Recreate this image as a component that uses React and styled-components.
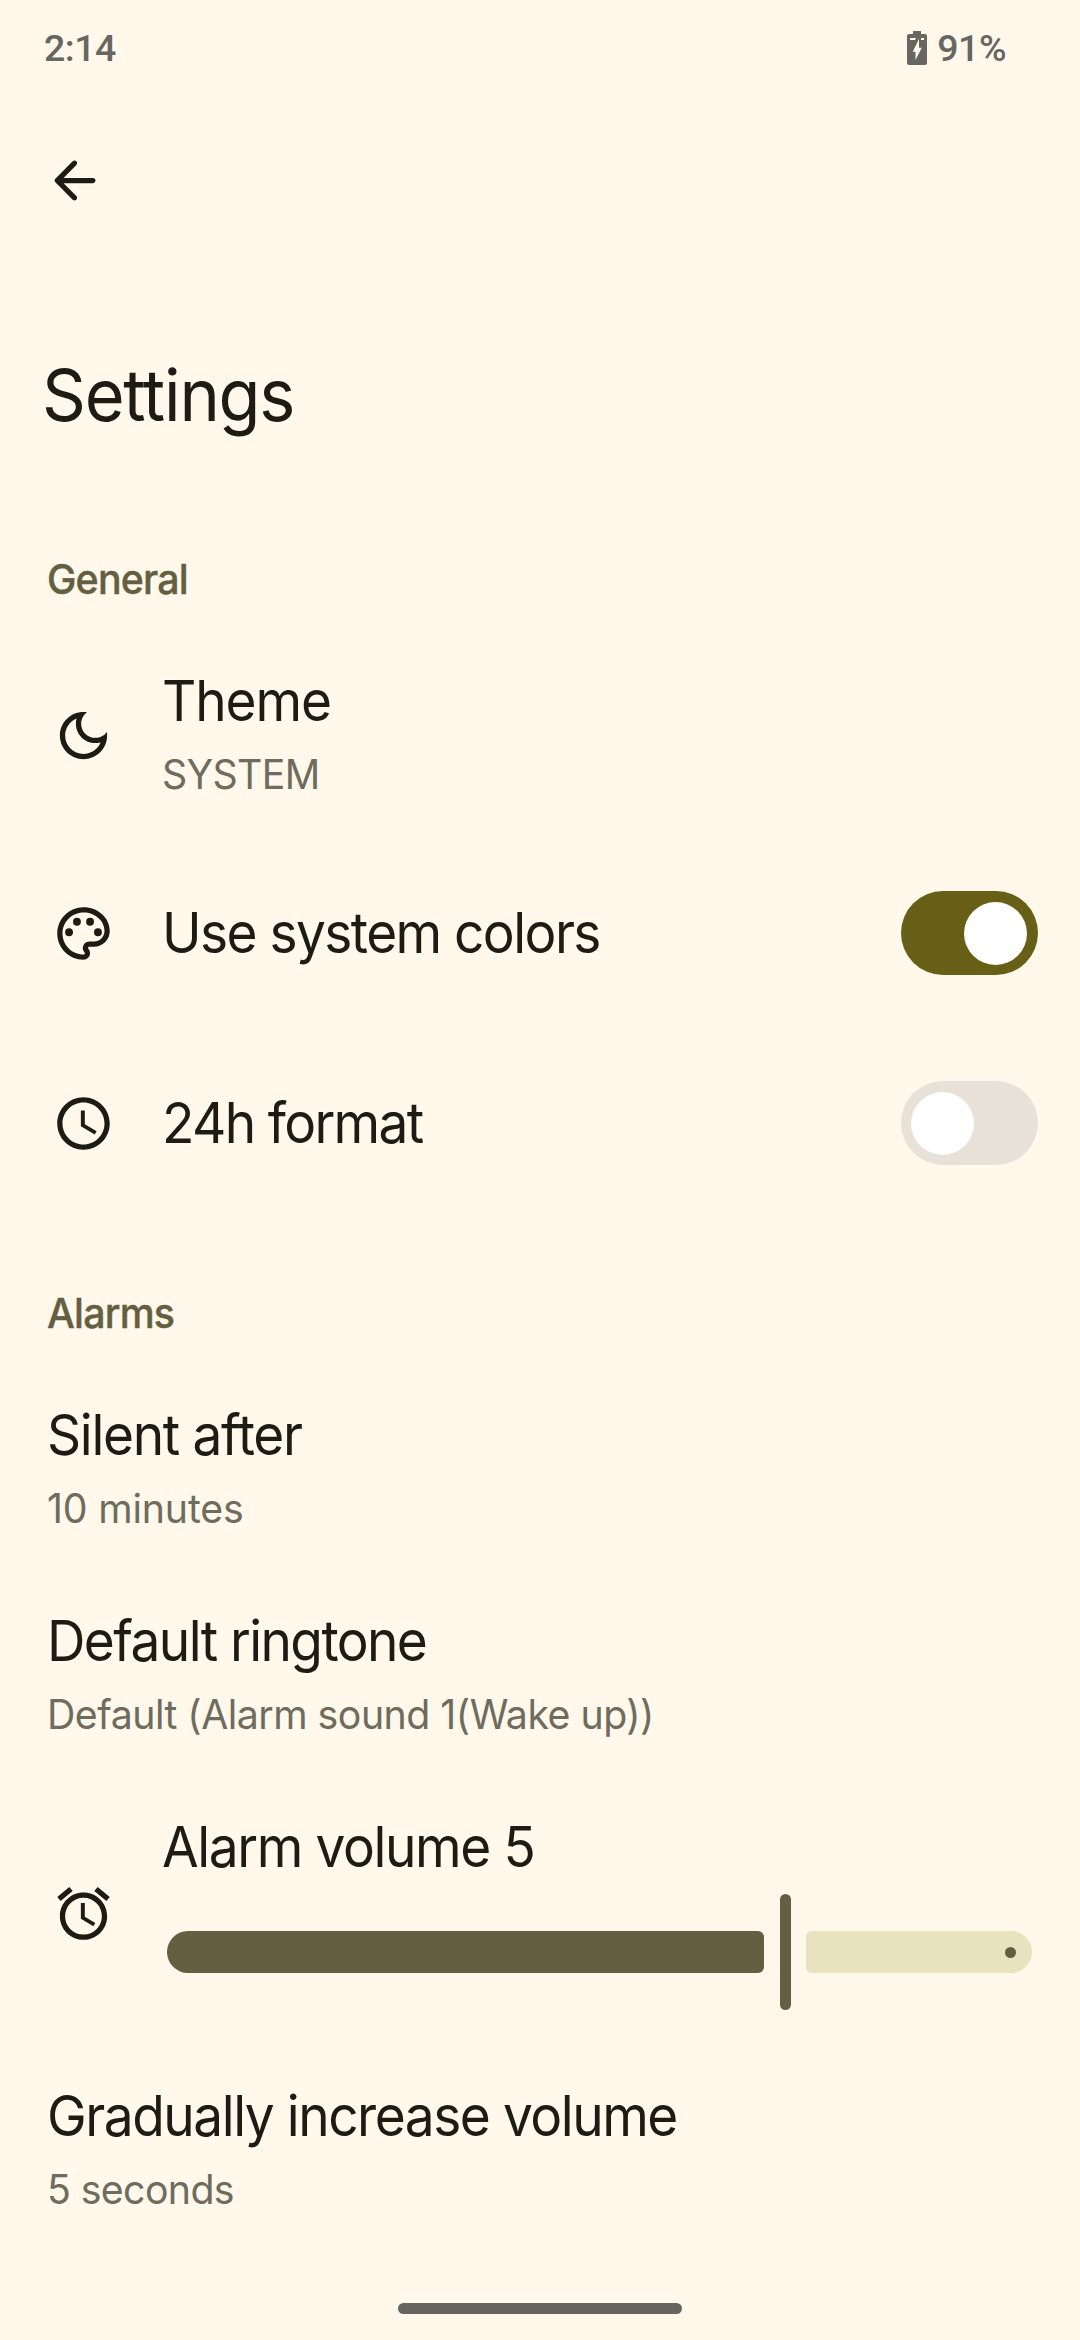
import React from "react";
import styled, { createGlobalStyle } from "styled-components";

const GlobalStyle = createGlobalStyle`
  * { box-sizing: border-box; }
  html, body { margin: 0; padding: 0; background: #fff8eb; }
`;

const Screen = styled.div`
  width: 1080px;
  height: 2340px;
  display: flex;
  flex-direction: column;
  background: #fff8eb;
  color: #1d1c14;
  font-family: Inter, "Liberation Sans", sans-serif;
  overflow: hidden;
`;

const StatusBar = styled.header`
  height: 96px;
  flex: none;
  display: flex;
  align-items: center;
  justify-content: space-between;
  padding: 0 74px 0 44px;
  color: #676660;
  font: 500 37.5px/44px Roboto, sans-serif;
  letter-spacing: -0.5px;
`;

const Battery = styled.div`
  display: flex;
  align-items: center;
  gap: 10px;
`;

const TopBar = styled.div`
  height: 254px;
  flex: none;
  padding: 53px 43px 0;
`;

const BackButton = styled.button`
  display: block;
  width: 63px;
  height: 63px;
  padding: 0;
  border: 0;
  background: none;
  color: inherit;
`;

const Heading = styled.h1`
  margin: 0 0 44px 42px;
  font-size: 72px;
  line-height: 90px;
  font-weight: 400;
  letter-spacing: -1.27px;
  transform: scaleX(0.95);
  transform-origin: 0 0;
`;

const SectionTitle = styled.h2`
  margin: 70px 0 28px 47px;
  font-size: 41px;
  line-height: 50px;
  font-weight: 500;
  letter-spacing: -0.85px;
  color: #645f41;
  -webkit-text-stroke: 0.4px #645f41;
  transform: scaleX(0.96);
  transform-origin: 0 0;
`;

const Row = styled.div`
  flex: none;
  height: ${(p) => p.$height}px;
  display: flex;
  align-items: center;
  padding: 0 42px 0 ${(p) => (p.$inset ? 52 : 46.5)}px;
`;

const RowIcon = styled.svg`
  width: 63px;
  height: 63px;
  flex: none;
  margin: 1px 47px 0 0;
  fill: currentColor;
`;

const RowText = styled.div`
  flex: 1;
  min-width: 0;
  display: flex;
  flex-direction: column;
  gap: 14px;
`;

const Title = styled.div`
  font-size: 56px;
  line-height: 64px;
  letter-spacing: ${(p) => p.$track ?? -1.6}px;
  white-space: nowrap;
  transform: scaleX(0.95);
  transform-origin: 0 0;
`;

const Subtitle = styled.div`
  margin-bottom: -1px;
  padding-top: 1px;
  font-size: 40.5px;
  line-height: 54px;
  letter-spacing: ${(p) => p.$track ?? -0.55}px;
  color: #6d6c5d;
  white-space: nowrap;
  transform: scaleX(0.97);
  transform-origin: 0 0;
`;

const Switch = styled.div`
  width: 137px;
  height: 84px;
  flex: none;
  display: flex;
  align-items: center;
  justify-content: ${(p) => (p.$on ? "flex-end" : "flex-start")};
  padding: 0 ${(p) => (p.$on ? 11 : 10)}px;
  border-radius: 42px;
  background: ${(p) => (p.$on ? "#665f15" : "#e7e1d7")};
`;

const Thumb = styled.span`
  width: 63px;
  height: 63px;
  border-radius: 50%;
  background: #fff;
`;

const VolumeBlock = styled.div`
  flex: 1;
  min-width: 0;
  display: flex;
  flex-direction: column;
  gap: 15px;
`;

const Slider = styled.div`
  display: flex;
  align-items: center;
  height: 116px;
  margin: 0 6px 0 5px;
`;

const ActiveTrack = styled.div`
  flex: 1;
  height: 42px;
  border-radius: 21px 6px 6px 21px;
  background: #645f41;
`;

const Handle = styled.div`
  width: 11px;
  height: 116px;
  margin: 0 15px 0 16px;
  border-radius: 6px;
  background: #645f41;
`;

const InactiveTrack = styled.div`
  flex: none;
  width: 226px;
  height: 42px;
  display: flex;
  align-items: center;
  justify-content: flex-end;
  padding-right: 16px;
  border-radius: 6px 21px 21px 6px;
  background: #e8e3be;
`;

const StopDot = styled.span`
  width: 11px;
  height: 11px;
  border-radius: 50%;
  background: #645f41;
`;

const Footer = styled.footer`
  flex: 1;
  display: flex;
  justify-content: center;
  align-items: flex-end;
  padding-bottom: 26px;
`;

const HomeBar = styled.div`
  width: 284px;
  height: 11px;
  border-radius: 6px;
  background: #66655f;
`;

const MoonIcon = () => (
  <RowIcon viewBox="0 0 24 24">
    <path d="M9.37 5.51C9.19 6.15 9.1 6.82 9.1 7.5c0 4.08 3.32 7.4 7.4 7.4.68 0 1.35-.09 1.99-.27C17.45 17.19 14.93 19 12 19c-3.86 0-7-3.14-7-7 0-2.93 1.81-5.45 4.37-6.49zM12 3c-4.97 0-9 4.03-9 9s4.03 9 9 9 9-4.03 9-9c0-.46-.04-.92-.1-1.36-.98 1.37-2.58 2.26-4.4 2.26-2.98 0-5.4-2.42-5.4-5.4 0-1.81.89-3.42 2.26-4.4C12.92 3.04 12.46 3 12 3z" />
  </RowIcon>
);

const PaletteIcon = () => (
  <RowIcon viewBox="0 0 24 24">
    <path d="M12 22C6.49 22 2 17.51 2 12S6.49 2 12 2s10 4.04 10 9c0 3.31-2.69 6-6 6h-1.77c-.28 0-.5.22-.5.5 0 .12.05.23.13.33.41.47.64 1.06.64 1.67A2.5 2.5 0 0 1 12 22zm0-18c-4.41 0-8 3.59-8 8s3.59 8 8 8c.28 0 .5-.22.5-.5a.54.54 0 0 0-.14-.35c-.41-.46-.63-1.05-.63-1.65a2.5 2.5 0 0 1 2.5-2.5H16c2.21 0 4-1.79 4-4 0-3.86-3.59-7-8-7z" />
    <circle cx="6.5" cy="11.5" r="1.5" />
    <circle cx="9.5" cy="7.5" r="1.5" />
    <circle cx="14.5" cy="7.5" r="1.5" />
    <circle cx="17.5" cy="11.5" r="1.5" />
  </RowIcon>
);

const ClockIcon = () => (
  <RowIcon viewBox="0 0 24 24">
    <path d="M11.99 2C6.47 2 2 6.48 2 12s4.47 10 9.99 10C17.52 22 22 17.52 22 12S17.52 2 11.99 2zM12 20c-4.42 0-8-3.58-8-8s3.58-8 8-8 8 3.58 8 8-3.58 8-8 8zm.5-13H11v6l5.25 3.15.75-1.23-4.5-2.67z" />
  </RowIcon>
);

const AlarmIcon = () => (
  <RowIcon viewBox="0 0 24 24">
    <path d="M22 5.72l-4.6-3.86-1.29 1.53 4.6 3.86L22 5.72zM7.88 3.39L6.6 1.86 2 5.71l1.29 1.53 4.59-3.85zM12.5 8H11v6l4.75 2.85.75-1.23-4-2.37V8zM12 4c-4.97 0-9 4.03-9 9s4.02 9 9 9c4.97 0 9-4.03 9-9s-4.03-9-9-9zm0 16c-3.87 0-7-3.13-7-7s3.13-7 7-7 7 3.13 7 7-3.13 7-7 7z" />
  </RowIcon>
);

const BatteryIcon = () => (
  <svg width="20" height="34" viewBox="0 0 20 34">
    <path fill="currentColor" d="M6 0h8v3h4a2 2 0 0 1 2 2v27a2 2 0 0 1-2 2H2a2 2 0 0 1-2-2V5a2 2 0 0 1 2-2h4z" />
    <path fill="#fff8eb" d="M3 7h6l-1 2H3zM14 7h3v2h-3zM12 8v8.700h2.800L8.500 29v-8.300H5.700z" />
  </svg>
);

const BackIcon = () => (
  <svg width="63" height="63" viewBox="0 0 24 24" fill="currentColor">
    <path d="M19 11H7.830l4.880-4.880c.39-.39.39-1.030 0-1.420-.39-.39-1.020-.39-1.410 0l-6.590 6.590c-.39.39-.39 1.020 0 1.410l6.590 6.590c.39.39 1.020.39 1.410 0 .39-.39.39-1.020 0-1.410L7.830 13H19c.55 0 1-.45 1-1s-.45-1-1-1z" />
  </svg>
);

export default function App() {
  return (
    <Screen>
      <GlobalStyle />
      <StatusBar>
        <span>2:14</span>
        <Battery>
          <BatteryIcon />
          <span>91%</span>
        </Battery>
      </StatusBar>
      <TopBar>
        <BackButton aria-label="Back">
          <BackIcon />
        </BackButton>
      </TopBar>
      <Heading>Settings</Heading>

      <SectionTitle>General</SectionTitle>
      <Row $height={206} $inset>
        <MoonIcon />
        <RowText>
          <Title $track={-1.15}>Theme</Title>
          <Subtitle $track={-0.68}>SYSTEM</Subtitle>
        </RowText>
      </Row>
      <Row $height={190} $inset>
        <PaletteIcon />
        <RowText>
          <Title $track={-1.64}>Use system colors</Title>
        </RowText>
        <Switch $on>
          <Thumb />
        </Switch>
      </Row>
      <Row $height={190} $inset>
        <ClockIcon />
        <RowText>
          <Title $track={-1.76}>24h format</Title>
        </RowText>
        <Switch>
          <Thumb />
        </Switch>
      </Row>

      <SectionTitle>Alarms</SectionTitle>
      <Row $height={206}>
        <RowText>
          <Title $track={-1.38}>Silent after</Title>
          <Subtitle $track={-0.19}>10 minutes</Subtitle>
        </RowText>
      </Row>
      <Row $height={206}>
        <RowText>
          <Title $track={-1.67}>Default ringtone</Title>
          <Subtitle $track={-0.53}>Default (Alarm sound 1(Wake up))</Subtitle>
        </RowText>
      </Row>
      <Row $height={269} $inset>
        <AlarmIcon />
        <VolumeBlock>
          <Title $track={-1.46}>Alarm volume 5</Title>
          <Slider>
            <ActiveTrack />
            <Handle />
            <InactiveTrack>
              <StopDot />
            </InactiveTrack>
          </Slider>
        </VolumeBlock>
      </Row>
      <Row $height={206}>
        <RowText>
          <Title $track={-1.54}>Gradually increase volume</Title>
          <Subtitle $track={-0.64}>5 seconds</Subtitle>
        </RowText>
      </Row>
      <Footer>
        <HomeBar />
      </Footer>
    </Screen>
  );
}
